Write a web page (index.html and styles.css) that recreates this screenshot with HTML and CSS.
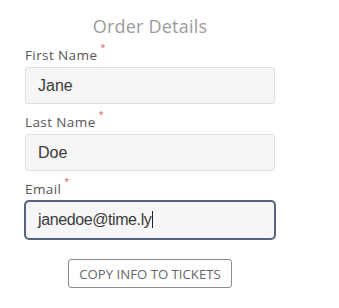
FILE: index.html
```html
<!DOCTYPE html>
<html>
<head>
<meta charset="utf-8">
<link rel="stylesheet" href="styles.css">
</head>
<body>
<form class="order-form">
  <h2 class="title">Order Details</h2>
  <div class="field">
    <label class="label">First Name<span class="req">*</span></label>
    <div class="input">Jane</div>
  </div>
  <div class="field">
    <label class="label">Last Name<span class="req">*</span></label>
    <div class="input">Doe</div>
  </div>
  <div class="field">
    <label class="label">Email<span class="req">*</span></label>
    <div class="input focused">janedoe@time.ly<span class="caret"></span></div>
  </div>
  <div class="actions">
    <button type="button" class="copy-btn">COPY INFO TO TICKETS</button>
  </div>
</form>
</body>
</html>
```
FILE: styles.css
```css
html, body {
  margin: 0;
  padding: 0;
  background: #fff;
}
.order-form {
  width: 250px;
  padding: 15px 0 0 25px;
  font-family: "Open Sans", "Liberation Sans", sans-serif;
}
.title {
  margin: 0 0 10px;
  font-size: 18px;
  line-height: 22px;
  font-weight: 400;
  color: #9b9b9b;
  text-align: center;
  letter-spacing: 0.2px;
}
.field {
  margin-bottom: 10px;
}
.label {
  display: block;
  font-size: 13.5px;
  line-height: 16px;
  letter-spacing: 0.4px;
  color: #555;
  margin-bottom: 4px;
}
.req {
  color: #d9534f;
  font-size: 9px;
  line-height: 0;
  vertical-align: 9px;
  margin-left: 3px;
}
.input {
  box-sizing: border-box;
  height: 37px;
  border: 1px solid #e0e0e0;
  border-radius: 3px;
  background: #f6f6f6;
  padding-left: 12px;
  font-family: "Liberation Sans", Arial, sans-serif;
  font-size: 16px;
  line-height: 35px;
  color: #3a3a3a;
}
.input.focused {
  border: 1px solid #56647a;
  box-shadow: 0 0 0 1px #56647a;
  border-radius: 4px;
  height: 38px;
  letter-spacing: -0.4px;
}
.caret {
  display: inline-block;
  width: 1px;
  height: 17px;
  background: #222;
  vertical-align: -3px;
  margin-left: 1px;
}
.actions {
  text-align: center;
  padding-top: 10px;
}
.copy-btn {
  height: 29px;
  padding: 0 10px;
  border: 1.5px solid #8c8c8c;
  border-radius: 3px;
  background: #fff;
  font-family: "Open Sans", "Liberation Sans", sans-serif;
  font-size: 13.2px;
  color: #666;
}
```
